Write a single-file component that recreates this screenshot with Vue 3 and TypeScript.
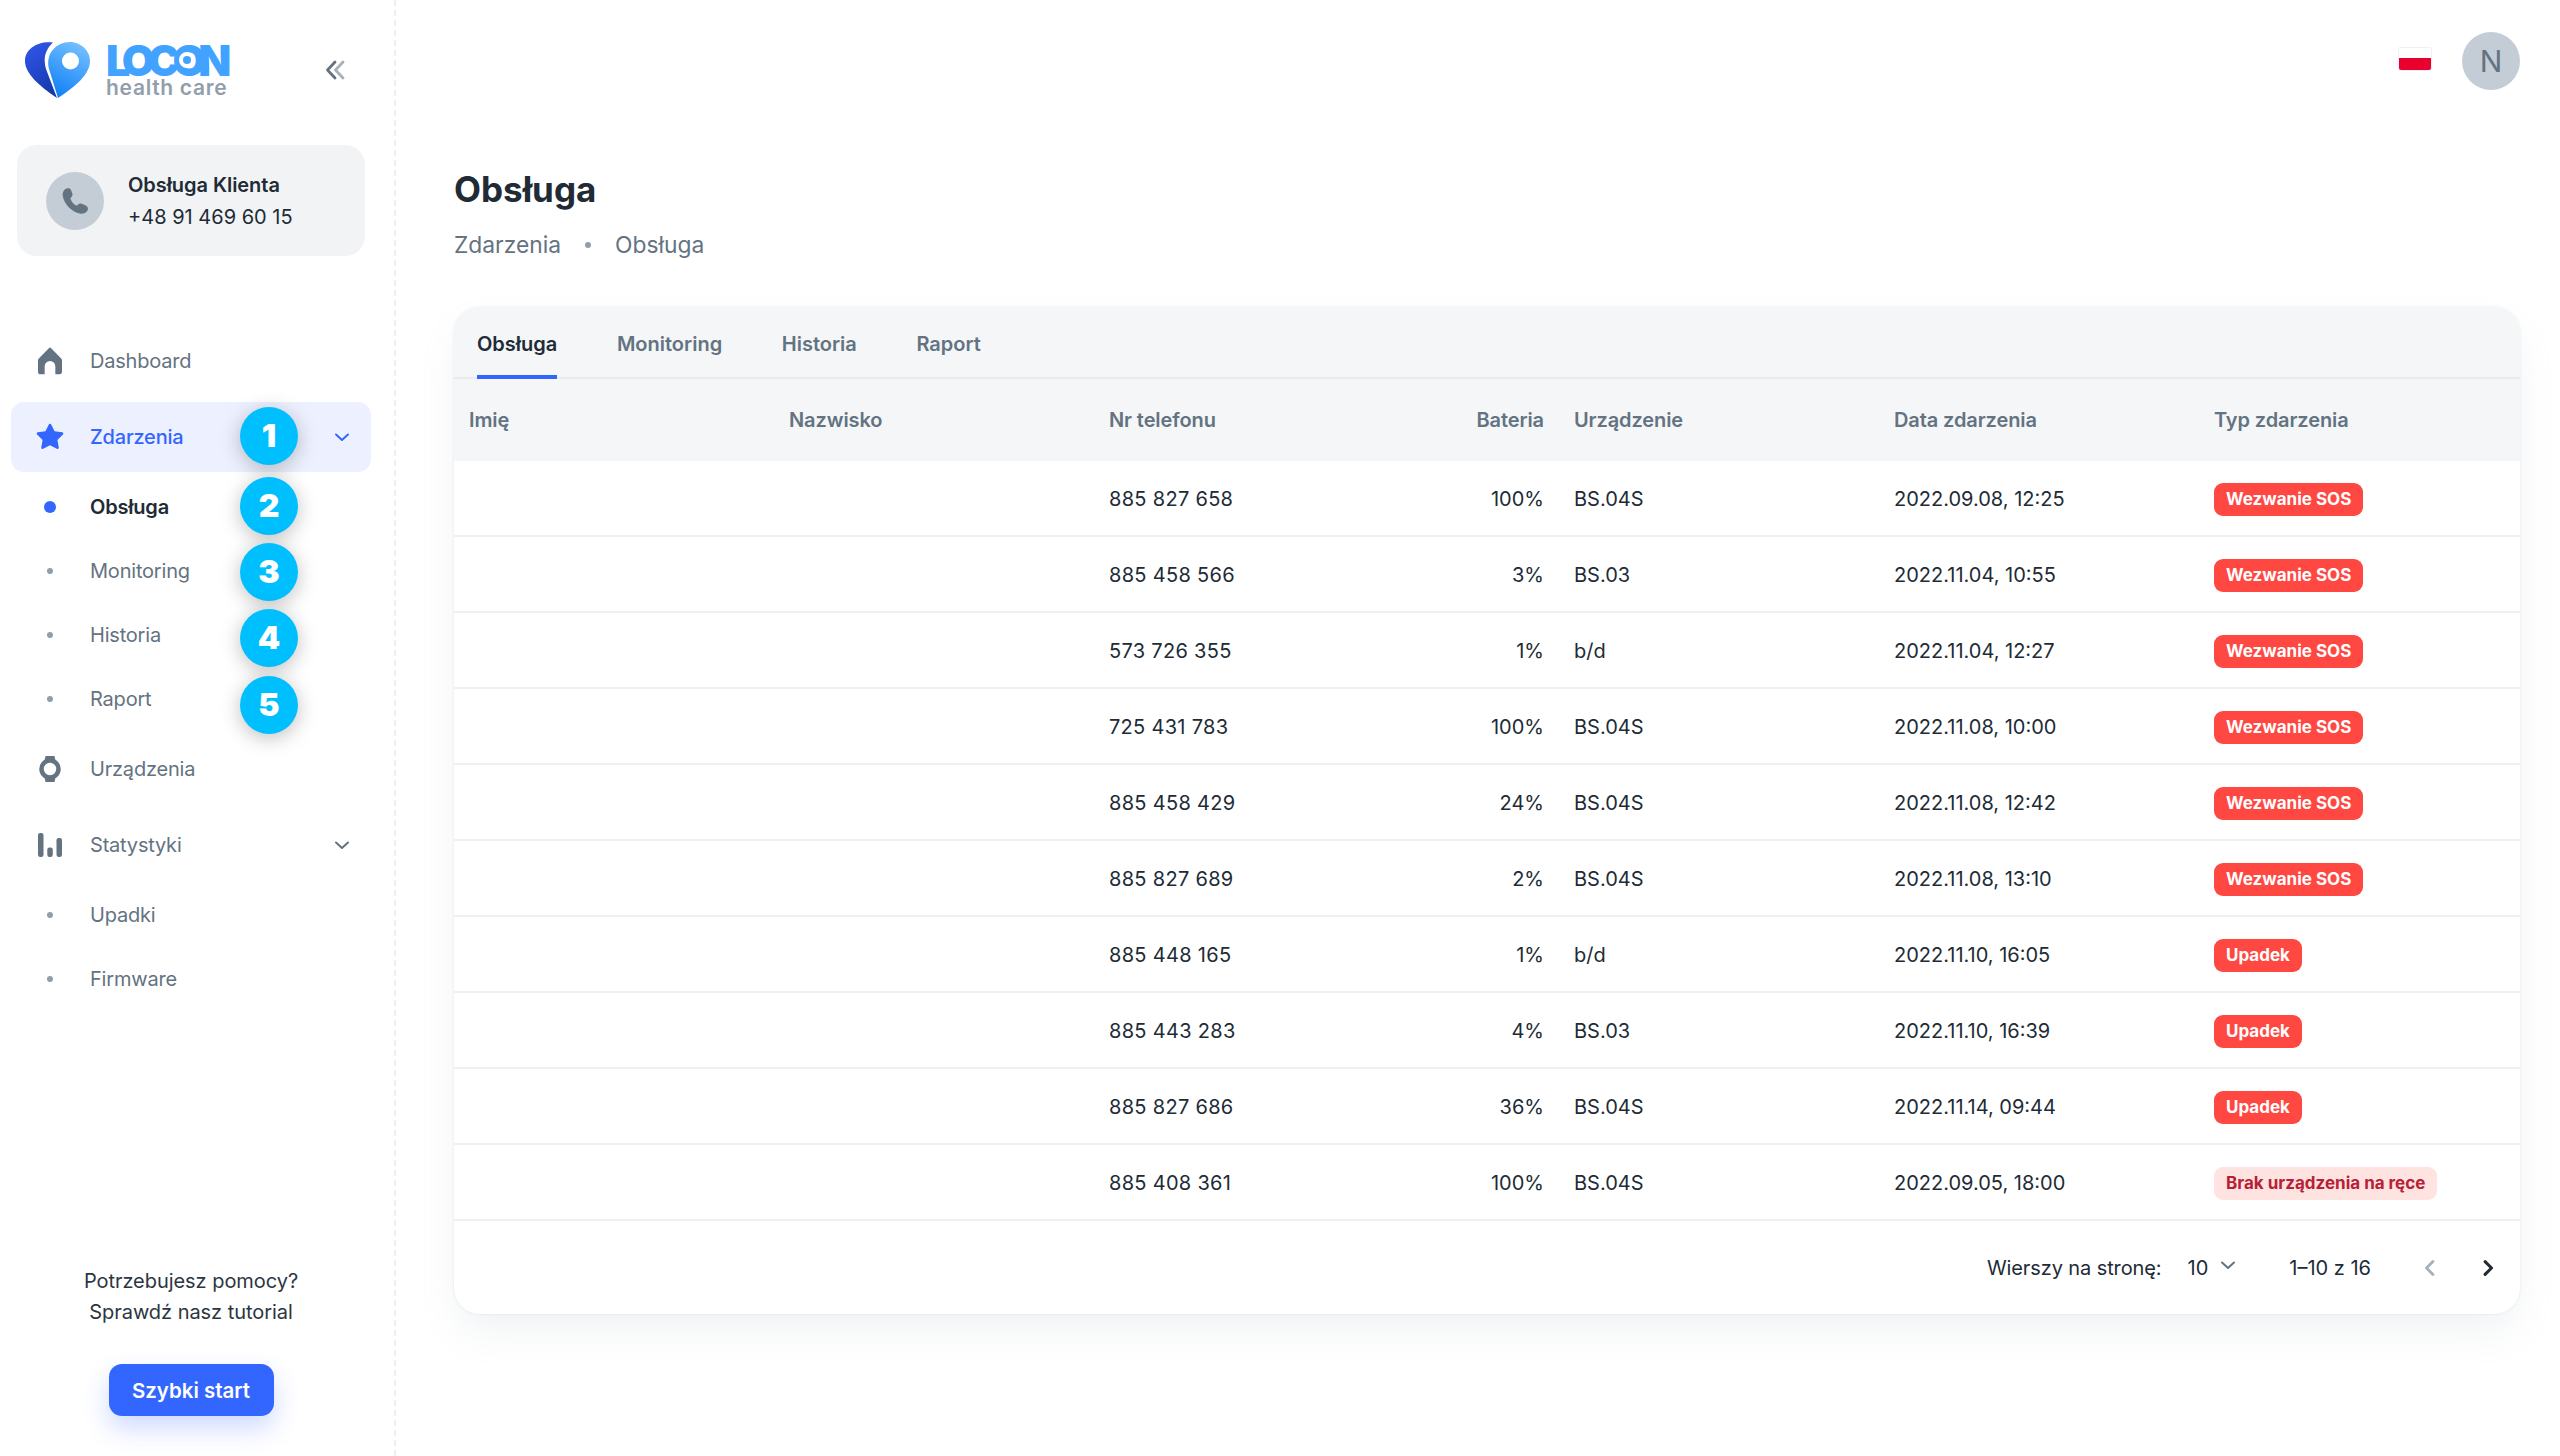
<script setup lang="ts">
interface Row { phone: string; battery: string; device: string; date: string; type: string; kind: 'solid' | 'soft' }
const sos = 'Wezwanie SOS'
const fall = 'Upadek'
const rows: Row[] = [
  { phone: '885 827 658', battery: '100%', device: 'BS.04S', date: '2022.09.08, 12:25', type: sos, kind: 'solid' },
  { phone: '885 458 566', battery: '3%', device: 'BS.03', date: '2022.11.04, 10:55', type: sos, kind: 'solid' },
  { phone: '573 726 355', battery: '1%', device: 'b/d', date: '2022.11.04, 12:27', type: sos, kind: 'solid' },
  { phone: '725 431 783', battery: '100%', device: 'BS.04S', date: '2022.11.08, 10:00', type: sos, kind: 'solid' },
  { phone: '885 458 429', battery: '24%', device: 'BS.04S', date: '2022.11.08, 12:42', type: sos, kind: 'solid' },
  { phone: '885 827 689', battery: '2%', device: 'BS.04S', date: '2022.11.08, 13:10', type: sos, kind: 'solid' },
  { phone: '885 448 165', battery: '1%', device: 'b/d', date: '2022.11.10, 16:05', type: fall, kind: 'solid' },
  { phone: '885 443 283', battery: '4%', device: 'BS.03', date: '2022.11.10, 16:39', type: fall, kind: 'solid' },
  { phone: '885 827 686', battery: '36%', device: 'BS.04S', date: '2022.11.14, 09:44', type: fall, kind: 'solid' },
  { phone: '885 408 361', battery: '100%', device: 'BS.04S', date: '2022.09.05, 18:00', type: 'Brak urządzenia na ręce', kind: 'soft' },
]
const columns = ['Imię', 'Nazwisko', 'Nr telefonu', 'Bateria', 'Urządzenie', 'Data zdarzenia', 'Typ zdarzenia']
const tabs = ['Obsługa', 'Monitoring', 'Historia', 'Raport']
const markers = [
  { n: 1, y: 407 },
  { n: 2, y: 477 },
  { n: 3, y: 543 },
  { n: 4, y: 609 },
  { n: 5, y: 676 },
]
</script>

<template>
  <div class="page">
    <aside class="side">
      <header class="brand">
        <div class="logo">
          <svg class="heart" width="65" height="56" viewBox="0 0 65 56">
            <defs>
              <linearGradient id="pinGrad" x1="0.7" y1="0" x2="0.3" y2="1">
                <stop offset="0" stop-color="#74c0ff" />
                <stop offset="1" stop-color="#1080f5" />
              </linearGradient>
              <linearGradient id="darkGrad" x1="0.3" y1="0" x2="0.7" y2="1">
                <stop offset="0" stop-color="#2f55e8" />
                <stop offset="1" stop-color="#1638a8" />
              </linearGradient>
            </defs>
            <path d="M28 .6C13 -1.500 0 7 0 19c0 12 13 24 32 37L21 27C18 17 20 8 28 .6Z" fill="url(#darkGrad)" />
            <path d="M33 56 24 27C20 12 31 0 45 0c11 0 20 9 20 19 0 13-14 25-32 37Z" fill="url(#pinGrad)" />
            <circle cx="45.500" cy="19" r="8.500" fill="#fff" />
          </svg>
          <div class="wordmark">
            <span class="locon">LOCON<i class="locon-eye"></i></span>
            <span class="care">health care</span>
          </div>
        </div>
        <svg class="collapse" width="22" height="22" viewBox="0 0 22 22" fill="none" stroke-width="2.800" stroke-linecap="round" stroke-linejoin="round">
          <path d="M11 3 3.500 11 11 19" stroke="#637381" />
          <path d="M19 3 11.500 11 19 19" stroke="#a6b1bc" />
        </svg>
      </header>

      <div class="contact">
        <div class="contact-icon">
          <svg width="32" height="32" viewBox="0 0 24 24" fill="#637381">
            <path d="M6.500 2.500C4 3 2.500 5 2.800 8c.7 6 7.200 13 13.700 13.500 3 .2 5-1.500 5.200-3.500.1-1.400-.7-2.200-1.900-2.800L17 14c-1.200-.5-2 0-2.800.9-.6.7-1.200.7-2 .1-1.400-1-2.600-2.400-3.300-4-.4-.8-.3-1.200.3-1.800.8-.8 1.200-1.600.8-2.800l-1-2.600c-.4-1.100-1.400-1.600-2.500-1.300Z" />
          </svg>
        </div>
        <div>
          <div class="contact-name">Obsługa Klienta</div>
          <div class="contact-phone">+48 91 469 60 15</div>
        </div>
      </div>

      <nav class="nav">
        <a class="item">
          <span class="ico">
            <svg width="32" height="32" viewBox="0 0 24 24" fill="#637381"><path d="M20.400 10.200 12.700 2.300a1 1 0 0 0-1.400 0L3.600 10.200A2 2 0 0 0 3 11.600V20a2 2 0 0 0 1.900 2H8v-6a4 4 0 0 1 8 0v6h3.100A2 2 0 0 0 21 20v-8.400a2 2 0 0 0-.6-1.400Z" /></svg>
          </span>
          <span>Dashboard</span>
        </a>
        <a class="item active">
          <span class="ico">
            <svg width="32" height="32" viewBox="0 0 24 24" fill="#3366ff"><path d="M17.560 21a1 1 0 0 1-.46-.11L12 18.220l-5.100 2.670a1 1 0 0 1-1.450-1.060l1-5.630-4.120-4a1 1 0 0 1-.25-1 1 1 0 0 1 .81-.68l5.700-.83 2.510-5.130a1 1 0 0 1 1.800 0l2.540 5.120 5.700.83a1 1 0 0 1 .81.68 1 1 0 0 1-.25 1l-4.120 4 1 5.630a1 1 0 0 1-.4 1 1 1 0 0 1-.57.19Z" /></svg>
          </span>
          <span>Zdarzenia</span>
          <svg class="chev" width="24" height="24" viewBox="0 0 24 24" fill="none" stroke="#3366ff" stroke-width="2" stroke-linecap="round" stroke-linejoin="round"><path d="m6 9.500 6 5.500 6-5.500" /></svg>
        </a>
        <a class="sub current"><span class="dotbox"><i class="dot big"></i></span><span>Obsługa</span></a>
        <a class="sub"><span class="dotbox"><i class="dot"></i></span><span>Monitoring</span></a>
        <a class="sub"><span class="dotbox"><i class="dot"></i></span><span>Historia</span></a>
        <a class="sub"><span class="dotbox"><i class="dot"></i></span><span>Raport</span></a>
        <a class="item after-sub">
          <span class="ico">
            <svg width="32" height="32" viewBox="0 0 32 32"><circle cx="16" cy="16" r="8.500" fill="none" stroke="#637381" stroke-width="4.500" /><path d="M11.500 3h9l1 5h-11zM10.500 24h11l-1 5h-9z" fill="#637381" /></svg>
          </span>
          <span>Urządzenia</span>
        </a>
        <a class="item before-sub">
          <span class="ico">
            <svg width="32" height="32" viewBox="0 0 32 32" fill="#637381"><rect x="4" y="4" width="5.500" height="24" rx="2.200" /><rect x="13.300" y="18.500" width="5.500" height="9.500" rx="2.200" /><rect x="22.500" y="9" width="5.500" height="19" rx="2.200" /></svg>
          </span>
          <span>Statystyki</span>
          <svg class="chev" width="24" height="24" viewBox="0 0 24 24" fill="none" stroke="#637381" stroke-width="2" stroke-linecap="round" stroke-linejoin="round"><path d="m6 9.500 6 5.500 6-5.500" /></svg>
        </a>
        <a class="sub"><span class="dotbox"><i class="dot"></i></span><span>Upadki</span></a>
        <a class="sub"><span class="dotbox"><i class="dot"></i></span><span>Firmware</span></a>
      </nav>

      <div class="help">
        <p>Potrzebujesz pomocy?<br />Sprawdź nasz tutorial</p>
        <button class="start">Szybki start</button>
      </div>

      <span v-for="m in markers" :key="m.n" class="marker" :style="{ top: m.y + 'px' }">{{ m.n }}</span>
    </aside>

    <main class="main">
      <div class="top">
        <span class="flag"><i></i></span>
        <span class="avatar">N</span>
      </div>
      <h1>Obsługa</h1>
      <div class="crumbs"><span>Zdarzenia</span><i></i><span>Obsługa</span></div>

      <section class="card">
        <div class="tabs">
          <span v-for="(t, i) in tabs" :key="t" class="tab" :class="{ on: i === 0 }">{{ t }}</span>
        </div>
        <table>
          <colgroup>
            <col class="w320" /><col class="w320" /><col class="w320" /><col class="w145" /><col class="w320" /><col class="w320" /><col class="w321" />
          </colgroup>
          <thead>
            <tr>
              <th v-for="(c, i) in columns" :key="c" :class="{ num: i === 3 }">{{ c }}</th>
            </tr>
          </thead>
          <tbody>
            <tr v-for="r in rows" :key="r.phone">
              <td></td>
              <td></td>
              <td class="phone">{{ r.phone }}</td>
              <td class="num">{{ r.battery }}</td>
              <td>{{ r.device }}</td>
              <td>{{ r.date }}</td>
              <td><span class="tag" :class="r.kind">{{ r.type }}</span></td>
            </tr>
          </tbody>
        </table>
        <footer class="foot">
          <span class="rows-label">Wierszy na stronę:</span>
          <span class="rows-val">10</span>
          <svg class="rows-chev" width="24" height="24" viewBox="0 0 24 24" fill="none" stroke="#637381" stroke-width="2" stroke-linecap="round" stroke-linejoin="round"><path d="m6 8.500 6 5.500 6-5.500" /></svg>
          <span class="range">1–10 z 16</span>
          <span class="pager">
            <svg width="28" height="28" viewBox="0 0 24 24" fill="none" stroke="#a6b1bc" stroke-width="2.400" stroke-linecap="round" stroke-linejoin="round"><path d="M14.500 6.500 9 12l5.500 5.500" /></svg>
          </span>
          <span class="pager">
            <svg width="28" height="28" viewBox="0 0 24 24" fill="none" stroke="#212b36" stroke-width="2.600" stroke-linecap="round" stroke-linejoin="round"><path d="m9.500 6.500 5.500 5.500-5.500 5.500" /></svg>
          </span>
        </footer>
      </section>
    </main>
  </div>
</template>

<style>
html, body { margin: 0; background: #fff; }
</style>

<style scoped>
.page {
  display: flex;
  width: 2560px;
  height: 1456px;
  overflow: hidden;
  background: #fff;
  color: #212b36;
  font-family: "Inter", "Liberation Sans", sans-serif;
  font-size: 20px;
}
.side {
  position: relative;
  box-sizing: border-box;
  width: 396px;
  height: 1456px;
  flex: none;
  display: flex;
  flex-direction: column;
  border-right: 2px dashed #eceff2;
}
.brand {
  height: 145px;
  flex: none;
  box-sizing: border-box;
  padding: 0 48px 6px 25px;
  display: flex;
  align-items: center;
  justify-content: space-between;
}
.logo { display: flex; align-items: center; gap: 16px; }
.heart { display: block; }
.wordmark { display: flex; flex-direction: column; width: 126px; }
.locon {
  position: relative;
  display: block;
  font-weight: 900;
  font-size: 43px;
  line-height: 36px;
  letter-spacing: -7.400px;
  color: #42a2ff;
  white-space: nowrap;
}
.locon-eye {
  position: absolute;
  left: 73px;
  top: 10px;
  width: 8px;
  height: 8px;
  border: 4px solid #fff;
  border-radius: 50%;
  background: #42a2ff;
}
.care {
  font-weight: 600;
  font-size: 21px;
  line-height: 20px;
  letter-spacing: 0.7px;
  color: #919eab;
  white-space: nowrap;
}
.contact {
  margin: 0 29px 0 17px;
  height: 111px;
  flex: none;
  box-sizing: border-box;
  padding-left: 29px;
  display: flex;
  align-items: center;
  gap: 24px;
  border-radius: 20px;
  background: #f2f3f5;
}
.contact-icon {
  width: 58px;
  height: 58px;
  border-radius: 50%;
  background: #c4cdd5;
  display: flex;
  align-items: center;
  justify-content: center;
}
.contact-name { font-weight: 600; line-height: 32px; letter-spacing: -0.05px; }
.contact-phone { line-height: 32px; }
.nav { margin-top: 70px; display: flex; flex-direction: column; letter-spacing: -0.2px; }
.item {
  margin: 0 23px 6px 11px;
  height: 70px;
  flex: none;
  box-sizing: border-box;
  padding: 0 17px 0 23px;
  display: flex;
  align-items: center;
  gap: 24px;
  border-radius: 13px;
  color: #637381;
}
.item.active { background: #edf1ff; color: #3366ff; font-weight: 500; margin-bottom: 3px; }
.item.after-sub { margin-top: 3px; }
.item.before-sub { margin-bottom: 3px; }
.ico { width: 32px; height: 32px; flex: none; display: block; }
.ico svg { display: block; }
.chev { margin-left: auto; }
.sub {
  margin-left: 34px;
  height: 64px;
  flex: none;
  display: flex;
  align-items: center;
  gap: 24px;
  color: #637381;
}
.sub.current { color: #212b36; font-weight: 600; }
.dotbox { width: 32px; display: flex; justify-content: center; flex: none; }
.dot { width: 6px; height: 6px; border-radius: 50%; background: #919eab; }
.dot.big { width: 12px; height: 12px; background: #3366ff; }
.marker {
  position: absolute;
  left: 240px;
  width: 58px;
  height: 58px;
  border-radius: 50%;
  background: #00bfff;
  box-shadow: 0 4px 20px rgba(0, 0, 0, 0.25);
  color: #fff;
  font-weight: 900;
  font-size: 32px;
  line-height: 58px;
  text-align: center;
}
.help {
  margin-top: auto;
  padding-bottom: 40px;
  padding-right: 12px;
  display: flex;
  flex-direction: column;
  align-items: center;
}
.help p { margin: 0 0 36px; text-align: center; line-height: 31px; color: #2c3641; letter-spacing: -0.05px; }
.start {
  width: 165px;
  height: 52px;
  border: 0;
  border-radius: 13px;
  background: #3366ff;
  color: #fff;
  font: 600 20.500px "Inter", "Liberation Sans", sans-serif;
  box-shadow: 0 12px 26px rgba(51, 102, 255, 0.24);
  padding: 0;
}
.main { flex: 1; min-width: 0; box-sizing: border-box; padding: 0 40px 0 58px; }
.top {
  height: 90px;
  box-sizing: border-box;
  padding-top: 32px;
  display: flex;
  align-items: flex-start;
  justify-content: flex-end;
}
.flag {
  margin: 15px 30px 0 0;
  width: 34px;
  height: 24px;
  box-sizing: border-box;
  border: 1px solid #eef0f2;
  border-radius: 2px;
  display: flex;
  align-items: flex-end;
}
.flag i { display: block; width: 100%; height: 12px; background: #e8002f; border-radius: 0 0 2px 2px; }
.avatar {
  width: 58px;
  height: 58px;
  border-radius: 50%;
  background: #c4cdd5;
  color: #637381;
  font-size: 30px;
  line-height: 58px;
  text-align: center;
}
h1 { margin: 78px 0 17px; font-size: 35px; line-height: 42px; font-weight: 700; }
.crumbs {
  display: flex;
  align-items: center;
  gap: 24px;
  font-size: 22.800px;
  line-height: 36px;
  color: #637381;
}
.crumbs i { width: 6px; height: 6px; border-radius: 50%; background: #919eab; }
.card {
  margin-top: 44px;
  width: 2066px;
  border-radius: 26px;
  overflow: hidden;
  background: #fff;
  box-shadow: 0 0 3px rgba(145, 158, 171, 0.2), 0 20px 40px -6px rgba(145, 158, 171, 0.14);
}
.tabs {
  height: 72px;
  box-sizing: border-box;
  padding-left: 23px;
  display: flex;
  gap: 59.600px;
  background: #f4f6f8;
  border-bottom: 2px solid #e9ecef;
}
.tab {
  height: 72px;
  line-height: 74px;
  color: #637381;
  font-weight: 600;
  box-sizing: border-box;
}
.tab.on { color: #212b36; border-bottom: 4px solid #3366ff; }
table { width: 2066px; border-collapse: separate; border-spacing: 0; table-layout: fixed; }
.w320 { width: 320px; }
.w145 { width: 145px; }
.w321 { width: 321px; }
th {
  height: 82px;
  padding: 0 15px;
  background: #f4f6f8;
  color: #637381;
  font-weight: 600;
  letter-spacing: -0.1px;
  text-align: left;
}
td { height: 76px; box-sizing: border-box; padding: 2px 15px 0; border-bottom: 2px solid #eef0f3; }
td.phone { letter-spacing: 0.3px; }
th.num, td.num { text-align: right; }
.tag {
  display: inline-block;
  height: 33px;
  padding: 0 12px;
  border-radius: 9px;
  font-size: 17px;
  font-weight: 700;
  line-height: 33px;
  vertical-align: middle;
}
.tag.solid { background: #ff4842; color: #fff; }
.tag.soft { background: #ffe3e1; color: #b72136; }
.foot {
  height: 93px;
  padding-right: 12px;
  display: flex;
  align-items: center;
  justify-content: flex-end;
}
.rows-label { letter-spacing: -0.1px; }
.rows-val { margin-left: 26px; }
.rows-chev { margin: -4px 0 0 8px; }
.range { margin: 0 39px 0 49px; }
.pager { width: 40px; height: 40px; display: flex; align-items: center; justify-content: center; }
.pager + .pager { margin-left: 18px; }
</style>
